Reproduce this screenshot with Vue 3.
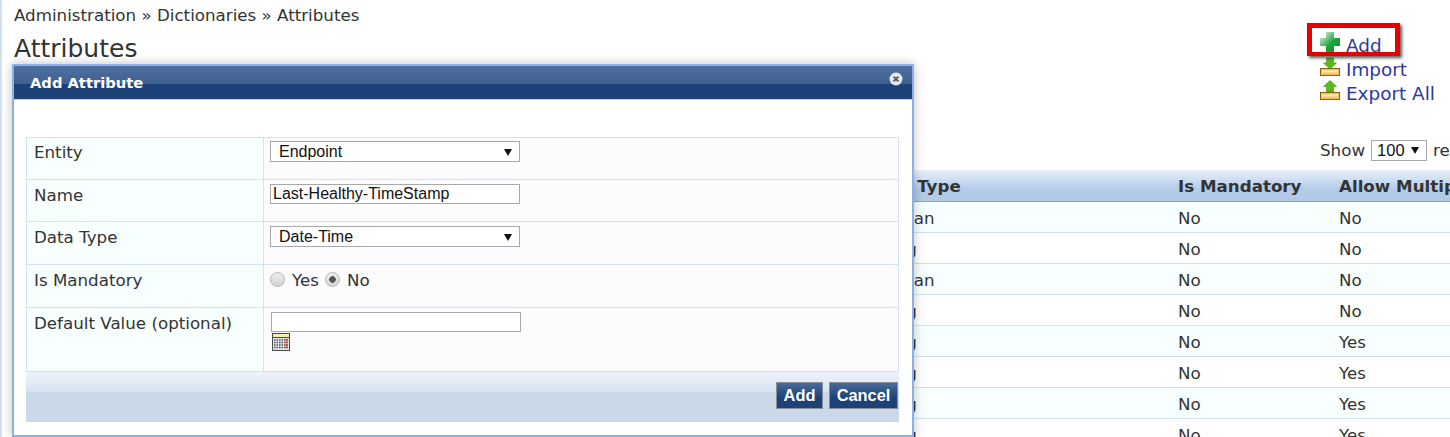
<script setup>
const rows = [
  { type: 'Boolean', mandatory: 'No', multiple: 'No' },
  { type: 'String', mandatory: 'No', multiple: 'No' },
  { type: 'Boolean', mandatory: 'No', multiple: 'No' },
  { type: 'String', mandatory: 'No', multiple: 'No' },
  { type: 'String', mandatory: 'No', multiple: 'Yes' },
  { type: 'String', mandatory: 'No', multiple: 'Yes' },
  { type: 'String', mandatory: 'No', multiple: 'Yes' },
  { type: 'String', mandatory: 'No', multiple: 'Yes' },
]
</script>

<template>
  <main class="page">
    <div class="top">
      <div class="heading">
        <div class="crumbs">Administration » Dictionaries » Attributes</div>
        <h1>Attributes</h1>
      </div>
      <div class="actions">
        <a class="action">
          <svg class="icon" viewBox="0 0 20 20" width="20" height="20">
            <defs>
              <linearGradient id="plusFill" x1="0" y1="0" x2="1" y2="1">
                <stop offset="0.2" stop-color="#a8dcae" />
                <stop offset="0.55" stop-color="#1fa63e" />
                <stop offset="1" stop-color="#07882a" />
              </linearGradient>
            </defs>
            <path d="M6 0h8v6h6v8h-6v6H6v-6H0V6h6z" fill="url(#plusFill)" />
          </svg>
          <span>Add</span>
        </a>
        <a class="action">
          <svg class="icon" viewBox="0 0 20 20" width="20" height="20">
            <rect x="0.500" y="12.500" width="19" height="7" fill="#f2c25e" stroke="#8f5e10" />
            <path d="M2 15.500h16" stroke="#fff0c0" stroke-width="2" />
            <path d="M6.500 2h7v5h3l-6.500 6-6.500-6h3z" fill="#57bb1a" stroke="#3a8f10" stroke-width="0.600" />
          </svg>
          <span>Import</span>
        </a>
        <a class="action">
          <svg class="icon" viewBox="0 0 20 20" width="20" height="20">
            <rect x="0.500" y="12.500" width="19" height="7" fill="#f2c25e" stroke="#8f5e10" />
            <path d="M2 15.500h16" stroke="#fff0c0" stroke-width="2" />
            <path d="M10 0.500l6.500 6h-3v5.500h-7V6.500h-3z" fill="#57bb1a" stroke="#3a8f10" stroke-width="0.600" />
          </svg>
          <span>Export All</span>
        </a>
        <div class="highlight"></div>
      </div>
    </div>

    <div class="show-row">
      <span>Show</span>
      <span class="select-wrap small">
        <select class="page-size"><option>100</option></select>
      </span>
      <span>records</span>
    </div>

    <div class="list">
      <div class="list-row list-head">
        <div></div>
        <div>Data Type</div>
        <div>Is Mandatory</div>
        <div>Allow Multiple Values</div>
      </div>
      <div class="list-row" v-for="(row, i) in rows" :key="i" :class="{ odd: i % 2 === 0 }">
        <div></div>
        <div>{{ row.type }}</div>
        <div>{{ row.mandatory }}</div>
        <div>{{ row.multiple }}</div>
      </div>
    </div>

    <section class="dialog">
      <header class="dialog-title">
        <span>Add Attribute</span>
        <svg class="close" viewBox="0 0 14 14" width="14" height="14">
          <circle cx="7" cy="7" r="6.500" fill="#e8e8ea" />
          <path d="M4.600 4.600l4.800 4.800M9.400 4.600l-4.800 4.800" stroke="#4a5a70" stroke-width="1.800" />
        </svg>
      </header>
      <div class="dialog-body">
        <div class="form">
          <div class="form-row h42 first">
            <label>Entity</label>
            <div class="field">
              <span class="select-wrap">
                <select class="control"><option>Endpoint</option></select>
              </span>
            </div>
          </div>
          <div class="form-row h42">
            <label>Name</label>
            <div class="field">
              <input class="control text" value="Last-Healthy-TimeStamp" />
            </div>
          </div>
          <div class="form-row h43">
            <label>Data Type</label>
            <div class="field">
              <span class="select-wrap">
                <select class="control"><option>Date-Time</option></select>
              </span>
            </div>
          </div>
          <div class="form-row h43">
            <label>Is Mandatory</label>
            <div class="field radios">
              <input type="radio" name="mandatory" />
              <span class="radio-label">Yes</span>
              <input type="radio" name="mandatory" checked />
              <span>No</span>
            </div>
          </div>
          <div class="form-row h64">
            <label>Default Value (optional)</label>
            <div class="field stack">
              <input class="control text wide" />
              <svg class="calendar" viewBox="0 0 18 18" width="18" height="18">
                <rect x="0" y="0" width="18" height="18" fill="#4a4a4a" />
                <rect x="1" y="1" width="16" height="3" fill="#f3edb4" />
                <rect x="1" y="5" width="16" height="12" fill="#e4e4e4" />
                <path d="M2 7h14M2 9.500h14M2 12h14M2 14.500h14" stroke="#555" stroke-width="1.400" stroke-dasharray="1.500 1" />
                <path d="M14.500 6v10" stroke="#e23b3b" stroke-width="2" stroke-dasharray="1.500 1" />
              </svg>
            </div>
          </div>
        </div>
        <footer class="form-footer">
          <button class="btn add">Add</button>
          <button class="btn cancel">Cancel</button>
        </footer>
      </div>
    </section>
  </main>
</template>

<style scoped>
.page {
  position: relative;
  width: 1450px;
  height: 437px;
  overflow: hidden;
  box-sizing: border-box;
  border-left: 2px solid #d0e0f6;
  padding-left: 12px;
  background: #fff;
  font-family: "DejaVu Sans", Verdana, sans-serif;
  font-size: 16.700px;
  color: #333;
}

.top {
  display: flex;
  justify-content: space-between;
  height: 130px;
}

.crumbs {
  padding-top: 6px;
  line-height: 18px;
}

h1 {
  margin: 10px 0 0;
  font-size: 25px;
  font-weight: 400;
  line-height: 30px;
}

.actions {
  position: relative;
  display: flex;
  flex-direction: column;
  width: 130px;
  padding-top: 32px;
}

.action {
  display: flex;
  align-items: flex-start;
  gap: 6px;
  height: 24px;
  color: #2b3a9e;
  font-size: 18.400px;
  line-height: 20px;
}

.action span {
  align-self: flex-end;
}

.icon {
  flex: none;
}

.highlight {
  position: absolute;
  left: -13px;
  top: 23px;
  width: 93px;
  height: 33px;
  box-sizing: border-box;
  border: 5px solid #e60000;
  border-bottom-width: 4px;
  box-shadow: 2px 2px 3px rgba(0, 0, 0, 0.65);
}

.show-row {
  display: flex;
  align-items: center;
  gap: 6px;
  height: 40px;
  margin-left: 1306px;
  white-space: nowrap;
}

.select-wrap {
  position: relative;
  display: block;
  width: 250px;
}

.select-wrap::after {
  content: "";
  position: absolute;
  right: 8px;
  top: 8px;
  border-left: 4px solid transparent;
  border-right: 4px solid transparent;
  border-top: 7px solid #111;
  pointer-events: none;
}

.select-wrap.small {
  width: 56px;
}

.select-wrap.small::after {
  top: 7px;
}

select {
  appearance: none;
  border-radius: 0;
}

.page-size {
  display: block;
  box-sizing: border-box;
  width: 56px;
  height: 21px;
  padding: 0 0 0 5px;
  border: 1px solid #a9a9a9;
  background: #fff;
  font: 16.500px "Liberation Sans", Arial, sans-serif;
  color: #111;
}

.list {
  width: 1600px;
}

.list-row {
  display: grid;
  grid-template-columns: 853px 311px 161px 1fr;
  align-items: center;
  height: 31px;
  box-sizing: border-box;
  padding-top: 1px;
  border-bottom: 1px solid #cfe0f8;
  background: #fff;
}

.list-row.odd {
  background: #f8ffff;
}

.list-head {
  height: 32px;
  border-bottom: 1px solid #8fa3bb;
  background: linear-gradient(#e9f1fb, #b4cce9 60%, #b1c9e7);
  font-weight: 700;
}

.dialog {
  position: absolute;
  left: 10px;
  top: 64px;
  width: 902px;
  height: 373px;
  box-sizing: border-box;
  border: 2px solid #8fb0e6;
  background: #fff;
  box-shadow: 0 0 10px rgba(0, 0, 0, 0.25);
}

.dialog-title {
  display: flex;
  align-items: center;
  justify-content: space-between;
  box-sizing: border-box;
  height: 33px;
  padding: 0 9px 0 16px;
  background: linear-gradient(#4e6f9f, #3f6192 54%, #1c4277 54%, #1c4277);
  color: #fff;
  font-size: 14.700px;
  font-weight: 700;
}

.close {
  align-self: flex-start;
  margin-top: 6px;
}

.dialog-body {
  padding: 37px 13px 0 12px;
  border-top: 1px solid #b9cdf0;
}

.form {
  border-top: 1px solid #d3e0f8;
  border-left: 1px solid #d3e0f8;
}

.form-row {
  display: grid;
  grid-template-columns: 236px 1fr;
  box-sizing: border-box;
  border-bottom: 1px solid #d3e0f8;
}

.h42 { height: 42px; }
.h43 { height: 43px; }
.h64 { height: 64px; }

label {
  padding: 5px 7px;
  background: #f8ffff;
  line-height: 20px;
}

.first label {
  padding-top: 4px;
}

.field {
  padding: 4px 6px;
  border-left: 1px solid #d3e0f8;
  border-right: 1px solid #d3e0f8;
  background: #fcfcff;
}

.first .field {
  padding-top: 3px;
}

.control {
  display: block;
  box-sizing: border-box;
  width: 250px;
  height: 21px;
  padding: 0 0 0 8px;
  border: 1px solid #a9a9a9;
  background: #fff;
  font: 16px "Liberation Sans", Arial, sans-serif;
  color: #111;
}

.text {
  height: 20px;
  padding: 0 2px;
}

.wide {
  width: 250px;
  margin-left: 1px;
}

.calendar {
  display: block;
  margin: 1px 0 0 2px;
}

.radios {
  display: flex;
  align-items: flex-start;
  padding-top: 3px;
  line-height: 24px;
}

input[type="radio"] {
  appearance: none;
  flex: none;
  width: 15px;
  height: 15px;
  margin: 4px 7px 0 0;
  border: 1px solid #b8b8b8;
  border-radius: 50%;
  background: linear-gradient(#ededed, #d4d4d4);
}

input[type="radio"]:checked {
  margin-right: 7px;
  background: radial-gradient(circle, #555 0 3px, transparent 3.500px), linear-gradient(#ededed, #d4d4d4);
}

.radio-label {
  margin-right: 6px;
}

.form-footer {
  display: flex;
  justify-content: flex-end;
  align-items: flex-start;
  gap: 6px;
  box-sizing: border-box;
  height: 50px;
  padding: 10px 1px 0 0;
  background: linear-gradient(#eef3fa, #d6e2f2 40%, #cad9e9 40%, #cad9e9);
}

.btn {
  height: 27px;
  padding: 0;
  border: 1px solid #8a8f96;
  background: linear-gradient(#4a6b9b, #1c4277 60%);
  color: #fff;
  font: 700 16.400px "Liberation Sans", Arial, sans-serif;
}

.add {
  width: 47px;
}

.cancel {
  width: 69px;
}
</style>
